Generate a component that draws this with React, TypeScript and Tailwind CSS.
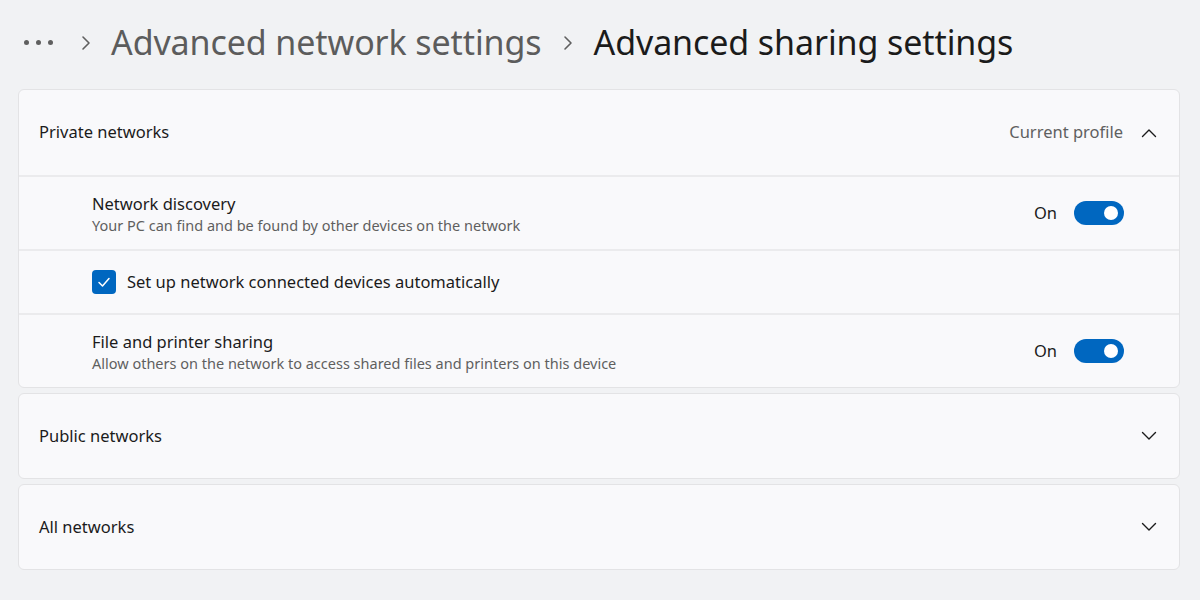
import React from "react";

const Toggle = () => (
  <div className="flex items-center gap-[17px]">
    <span className="text-[16.5px] text-[#1b1b1b]">On</span>
    <div className="w-[50px] h-[24px] rounded-full bg-[#0067c0] flex items-center justify-end pr-[6px]">
      <div className="w-[14px] h-[14px] rounded-full bg-white" />
    </div>
  </div>
);

const Chevron = ({ up }: { up?: boolean }) => (
  <svg width="16" height="10" viewBox="0 0 16 10" fill="none">
    <path
      d={up ? "M1.5 8.5 L8 2 L14.5 8.5" : "M1.5 1.5 L8 8 L14.5 1.5"}
      stroke="#1b1b1b"
      strokeWidth="1.4"
      strokeLinecap="round"
      strokeLinejoin="round"
    />
  </svg>
);

const SettingRow = ({ title, desc }: { title: string; desc: string }) => (
  <div className="h-[74px] flex items-center justify-between pl-[73px] pr-[55px] border-t-2 border-[#ebebed]">
    <div className="flex flex-col pt-[2px]">
      <span className="text-[16.5px] leading-[22px] text-[#1b1b1b]">{title}</span>
      <span className="text-[14.5px] leading-[21px] text-[#5f5f5f]">{desc}</span>
    </div>
    <Toggle />
  </div>
);

const Collapsed = ({ title }: { title: string }) => (
  <div className="h-[86px] rounded-[6px] border border-[#e3e3e5] bg-[#f9f9fb] flex items-center justify-between pl-[20px] pr-[22px]">
    <span className="text-[16.5px] text-[#1b1b1b]">{title}</span>
    <Chevron />
  </div>
);

export default function App() {
  return (
    <div
      className="w-[1200px] h-[600px] bg-[#f1f2f4] overflow-hidden px-[18px]"
      style={{ fontFamily: '"Noto Sans", "Open Sans", sans-serif' }}
    >
      {/* Breadcrumb */}
      <div className="h-[89px] flex items-center pl-[6px] pb-[4px]">
        <div className="flex items-center gap-[7px] mr-[28px]">
          <div className="w-[5px] h-[5px] rounded-full bg-[#5f5f5f]" />
          <div className="w-[5px] h-[5px] rounded-full bg-[#5f5f5f]" />
          <div className="w-[5px] h-[5px] rounded-full bg-[#5f5f5f]" />
        </div>
        <svg width="10" height="16" viewBox="0 0 10 16" fill="none" className="mr-[20px]">
          <path d="M2 2 L8 8 L2 14" stroke="#5f5f5f" strokeWidth="1.6" strokeLinecap="round" strokeLinejoin="round" />
        </svg>
        <span className="text-[34px] text-[#5c5c5c] tracking-[-0.1px]">Advanced network settings</span>
        <svg width="10" height="16" viewBox="0 0 10 16" fill="none" className="ml-[21px] mr-[21px]">
          <path d="M2 2 L8 8 L2 14" stroke="#5f5f5f" strokeWidth="1.6" strokeLinecap="round" strokeLinejoin="round" />
        </svg>
        <span className="text-[34px] text-[#1b1b1b] tracking-[-0.1px]">Advanced sharing settings</span>
      </div>

      <div className="flex flex-col gap-[5px] w-[1162px]">
        {/* Private networks */}
        <div className="rounded-[6px] border border-[#e3e3e5] bg-[#f9f9fb] overflow-hidden">
          <div className="h-[85px] flex items-center justify-between pl-[20px] pr-[22px]">
            <span className="text-[16.5px] text-[#1b1b1b]">Private networks</span>
            <div className="flex items-center gap-[18px]">
              <span className="text-[16.5px] text-[#5f5f5f]">Current profile</span>
              <Chevron up />
            </div>
          </div>
          <SettingRow
            title="Network discovery"
            desc="Your PC can find and be found by other devices on the network"
          />
          <div className="h-[64px] flex items-center pl-[73px] border-t-2 border-[#ebebed]">
            <div className="w-[24px] h-[24px] rounded-[4px] bg-[#0067c0] flex items-center justify-center mr-[11px]">
              <svg width="14" height="12" viewBox="0 0 14 12" fill="none">
                <path d="M2 6.5 L5.5 10 L12 2.5" stroke="white" strokeWidth="1.5" strokeLinecap="round" strokeLinejoin="round" />
              </svg>
            </div>
            <span className="text-[16.5px] text-[#1b1b1b]">Set up network connected devices automatically</span>
          </div>
          <SettingRow
            title="File and printer sharing"
            desc="Allow others on the network to access shared files and printers on this device"
          />
        </div>

        <Collapsed title="Public networks" />
        <Collapsed title="All networks" />
      </div>
    </div>
  );
}
